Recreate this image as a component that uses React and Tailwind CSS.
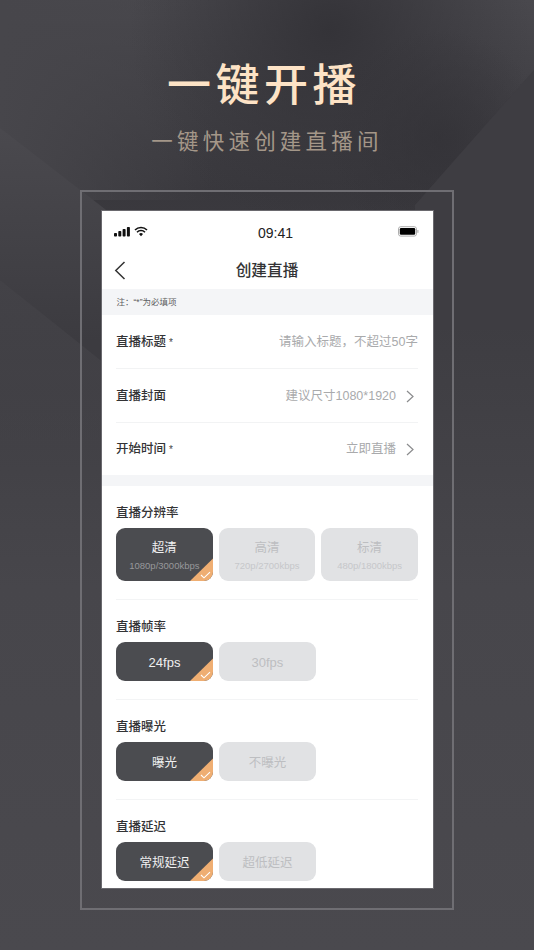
import React from "react";
function Check() {
  return (
    <span className="absolute right-0 bottom-0 w-[24px] h-[23px] overflow-hidden">
      <svg viewBox="0 0 24 23" className="w-full h-full">
        <path d="M1 23 L24 0.5 V23 Z" fill="#efae72" />
        <path d="M12 17 L15 19.8 L21 14.2" fill="none" stroke="#fff" strokeWidth="1.1" />
      </svg>
    </span>
  );
}
function Opt({ on, title, sub, h, big }) {
  return (
    <div className={`relative overflow-hidden w-[97px] ${h} rounded-[9px] pt-[2px] flex flex-col items-center justify-center ${on ? "bg-[#4b4c50]" : "bg-[#e1e2e4]"}`}>
      <span className={`${big ? "text-[13px]" : "text-[12.5px]"} leading-[18px] ${on ? "text-[#f0f0f0]" : "text-[#bdbec1]"}`}>{title}</span>
      {sub && <span className={`text-[9.5px] leading-[13px] mt-[2px] ${on ? "text-[#97989b]" : "text-[#c6c7ca]"}`}>{sub}</span>}
      {on && <Check />}
    </div>
  );
}
function Group({ label, opts, h, last, big }) {
  return (
    <div className={`pt-[19px] ${last ? "" : "pb-[17.4px] border-b border-[#f3f4f5]"}`}>
      <div className="text-[12.5px] leading-[16px] font-medium text-[#333335]">{label}</div>
      <div className="flex gap-[5.9px] mt-[7.6px]">
        {opts.map((o, i) => <Opt key={i} on={i === 0} title={o[0]} sub={o[1]} h={h} big={big} />)}
      </div>
    </div>
  );
}
function Chevron() {
  return (
    <svg width="8" height="13" viewBox="0 0 8 13" className="ml-[10px] mr-[4px]">
      <path d="M1 1 L7 6.5 L1 12" fill="none" stroke="#8a8b8d" strokeWidth="1.2" />
    </svg>
  );
}
function Row({ label, star, value, chev, border, h }) {
  return (
    <div className={`${h} pt-[2px] flex items-center justify-between ${border ? "border-b border-[#f2f3f4]" : ""}`}>
      <div className="text-[12.5px] font-medium text-[#333335] flex items-center">
        {label}{star && <span className="ml-[3px] text-[10px] text-[#444]">*</span>}
      </div>
      <div className="flex items-center text-[12.5px] text-[#a9aaac]">{value}{chev && <Chevron />}</div>
    </div>
  );
}
export default function App() {
  return (
    <div className="relative w-[534px] h-[950px] overflow-hidden bg-[#4a494e]" style={{ fontFamily: '"Liberation Sans", "Noto Sans CJK SC", sans-serif' }}>
      <svg className="absolute inset-0 w-full h-full" viewBox="0 0 534 950" preserveAspectRatio="none">
        <defs>
          <linearGradient id="a" x1="0" y1="0" x2="0" y2="1">
            <stop offset="0" stopColor="#49484d" /><stop offset="0.2" stopColor="#39383d" /><stop offset="0.34" stopColor="#3e3d42" /><stop offset="0.62" stopColor="#47464b" /><stop offset="1" stopColor="#4a494e" />
          </linearGradient>
          <radialGradient id="b" cx="330" cy="30" r="200" gradientUnits="userSpaceOnUse">
            <stop offset="0" stopColor="#323136" stopOpacity="0.9" /><stop offset="1" stopColor="#323136" stopOpacity="0" />
          </radialGradient>
          <radialGradient id="g" cx="440" cy="140" r="110" gradientUnits="userSpaceOnUse">
            <stop offset="0" stopColor="#323136" stopOpacity="0.7" /><stop offset="1" stopColor="#323136" stopOpacity="0" />
          </radialGradient>
          <linearGradient id="c" x1="0" y1="130" x2="0" y2="340" gradientUnits="userSpaceOnUse">
            <stop offset="0" stopColor="#4a494e" /><stop offset="1" stopColor="#3c3b40" />
          </linearGradient>
          <linearGradient id="e" x1="0" y1="280" x2="0" y2="480" gradientUnits="userSpaceOnUse">
            <stop offset="0" stopColor="#434247" /><stop offset="1" stopColor="#434247" stopOpacity="0" />
          </linearGradient>
          <linearGradient id="f" x1="0" y1="0" x2="534" y2="0" gradientUnits="userSpaceOnUse">
            <stop offset="0" stopColor="#47464b" /><stop offset="0.4" stopColor="#47464b" stopOpacity="0" />
          </linearGradient>
        </defs>
        <rect width="534" height="950" fill="url(#a)" />
        <rect width="534" height="200" fill="url(#f)" />
        <rect width="534" height="320" fill="url(#b)" />
        <rect y="20" width="534" height="240" fill="url(#g)" />
        <path d="M0 128 L110 213 L110 368 L0 280 Z" fill="url(#c)" />
        <path d="M0 280 L110 368 L110 480 L0 480 Z" fill="url(#e)" />
        <path d="M534 70 L415 205 L415 330 L534 330 Z" fill="#3e3d42" />
      </svg>
      <div className="relative flex flex-col items-center">
        <div className="mt-[56px] h-[60px] text-[44px] leading-[60px] font-medium tracking-[4.5px] text-[#fde3c6] pr-[6px]">一键开播</div>
        <div className="mt-[10px] h-[32px] text-[21.5px] leading-[32px] font-normal tracking-[4.2px] text-[#a49789]">一键快速创建直播间</div>
        <div className="mt-[32px] w-[374px] h-[720px] border-2 border-[#6f6e73] pt-[19px] pl-[19.5px]">
          <div className="w-[331px] h-[677px] bg-white overflow-hidden shadow-[0_0_0_1px_#6a696e]">
            <div className="h-[42px] relative">
              <span className="absolute left-[156.5px] top-[12.5px] text-[14px] leading-[18px] text-[#222]">09:41</span>
              <svg className="absolute left-[12px] top-[15px]" width="34" height="11" viewBox="0 0 34 11">
                <rect x="0" y="7" width="3" height="3.5" rx="0.8" fill="#111" />
                <rect x="4.3" y="5" width="3" height="5.5" rx="0.8" fill="#111" />
                <rect x="8.6" y="3" width="3" height="7.5" rx="0.8" fill="#111" />
                <rect x="12.9" y="1" width="3" height="9.5" rx="0.8" fill="#111" />
                <path d="M21 4 A8.6 8.6 0 0 1 33 4 M23 6.2 A5.6 5.6 0 0 1 31 6.2" fill="none" stroke="#111" strokeWidth="1.6" />
                <path d="M25 8 A3 3 0 0 1 29 8 L27 10.3 Z" fill="#111" />
              </svg>
              <svg className="absolute left-[296px] top-[15px]" width="21" height="11" viewBox="0 0 21 11">
                <rect x="0.5" y="0.7" width="18" height="9.4" rx="2.2" fill="none" stroke="#a5a5a5" strokeWidth="0.9" />
                <rect x="1.8" y="2" width="15.4" height="6.8" rx="1.2" fill="#000" />
                <rect x="19.4" y="4" width="1" height="2.8" fill="#a5a5a5" />
              </svg>
            </div>
            <div className="h-[36px] relative flex items-center justify-center">
              <svg className="absolute left-[12px] top-[8px]" width="12" height="19" viewBox="0 0 12 19">
                <path d="M10.5 1 L1.8 9.5 L10.5 18" fill="none" stroke="#333" strokeWidth="1.5" />
              </svg>
              <span className="text-[15.7px] font-medium text-[#333335]">创建直播</span>
            </div>
            <div className="h-[26px] bg-[#f4f5f7] flex items-center pl-[15px] text-[8.5px] text-[#5d5e61]">注：“*”为必填项</div>
            <div className="px-[14.5px]">
              <Row h="h-[54px]" label="直播标题" star value="请输入标题，不超过50字" border />
              <Row h="h-[53.5px]" label="直播封面" value="建议尺寸1080*1920" chev border />
              <Row h="h-[52.5px]" label="开始时间" star value="立即直播" chev />
            </div>
            <div className="h-[10.7px] bg-[#f4f5f7]" />
            <div className="px-[14.5px]">
              <Group label="直播分辨率" h="h-[53px]" opts={[["超清", "1080p/3000kbps"], ["高清", "720p/2700kbps"], ["标清", "480p/1800kbps"]]} />
              <Group label="直播帧率" h="h-[39px]" big opts={[["24fps"], ["30fps"]]} />
              <Group label="直播曝光" h="h-[39px]" opts={[["曝光"], ["不曝光"]]} />
              <Group label="直播延迟" h="h-[39px]" last opts={[["常规延迟"], ["超低延迟"]]} />
            </div>
          </div>
        </div>
      </div>
    </div>
  );
}
